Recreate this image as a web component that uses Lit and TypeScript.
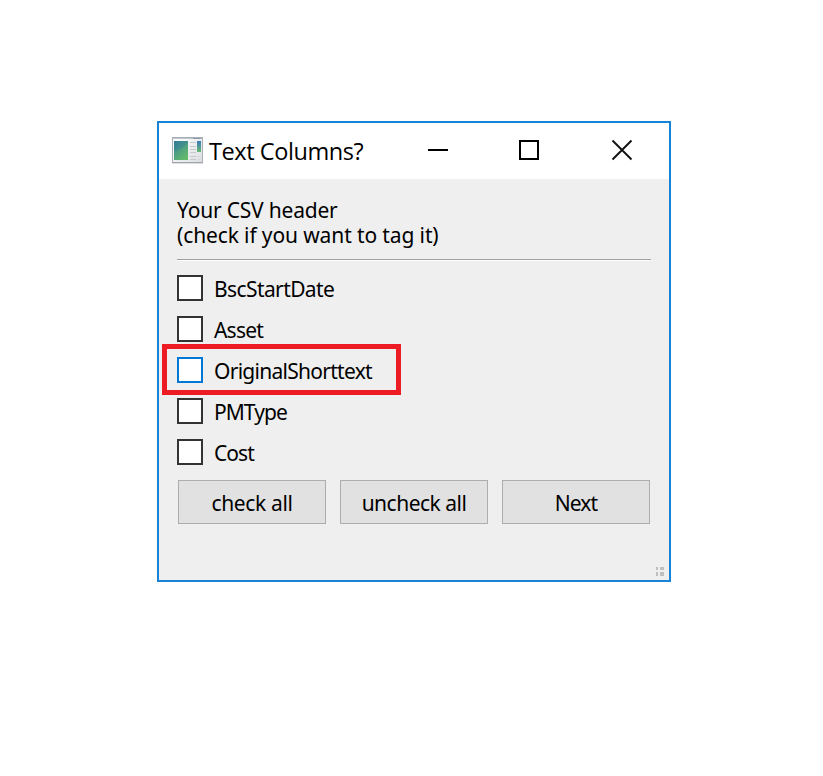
import { LitElement, html, css, svg } from "lit";
import { customElement, property } from "lit/decorators.js";
import { classMap } from "lit/directives/class-map.js";

interface Column {
  name: string;
  focused?: boolean;
  tracking: number;
}

const columns: Column[] = [
  { name: "BscStartDate", tracking: -0.6 },
  { name: "Asset", tracking: -0.8 },
  { name: "OriginalShorttext", focused: true, tracking: -0.72 },
  { name: "PMType", tracking: -0.95 },
  { name: "Cost", tracking: -0.95 },
];

const actions = [
  { label: "check all", tracking: -0.35 },
  { label: "uncheck all", tracking: -0.5 },
  { label: "Next", tracking: -0.9 },
];

@customElement("check-row")
class CheckRow extends LitElement {
  @property() label = "";
  @property({ type: Boolean }) focused = false;
  @property({ type: Number }) tracking = 0;

  static styles = css`
    :host { display: block; height: 41px; }
    .row { position: relative; display: flex; align-items: flex-start; height: 26px; gap: 11px; }
    .box { box-sizing: border-box; width: 26px; height: 26px; border: 2px solid #333; background: #fff; }
    .box.focused { border-color: #0078d7; }
    .label { line-height: 28px; white-space: nowrap; }
    .highlight {
      position: absolute; box-sizing: border-box;
      left: -15px; top: -13px; width: 239px; height: 51px;
      border: 5px solid #ed1c24;
    }
  `;

  render() {
    return html`<div class="row">
      <div class=${classMap({ box: true, focused: this.focused })}></div>
      <span class="label" style="letter-spacing:${this.tracking}px">${this.label}</span>
      ${this.focused ? html`<div class="highlight"></div>` : ""}
    </div>`;
  }
}

@customElement("app-root")
class AppRoot extends LitElement {
  static styles = css`
    :host {
      display: block; box-sizing: border-box; height: 776px;
      padding: 121px 152px 0 157px; background: #fff;
      font-family: "Noto Sans", sans-serif; font-size: 21px; color: #000;
    }
    .window {
      box-sizing: border-box; height: 461px; border: 2px solid #1883d7;
      background: #efefef; position: relative;
    }
    .titlebar { display: flex; height: 56px; background: #fff; }
    .appicon { width: 32px; height: 27px; margin: 14px 0 0 13px; }
    .title { width: 191px; margin-left: 5px; font: 23.5px/56px "Open Sans", sans-serif; letter-spacing: -0.42px; white-space: nowrap; }
    .controls { display: flex; padding: 16px 0 0 28px; gap: 71px; }
    .controls svg { width: 21px; height: 22px; overflow: visible; }
    .body { padding: 19px 18px 0; }
    .heading { height: 61px; line-height: 25px; white-space: nowrap; }
    .line1 { letter-spacing: -0.2px; }
    .line2 { letter-spacing: -0.12px; }
    .rule { height: 1px; background: #a0a0a0; border-bottom: 1px solid #fff; margin-bottom: 14px; }
    .actions { display: flex; gap: 14px; padding: 0 1px; }
    .btn {
      box-sizing: border-box; width: 148px; height: 44px; padding: 0; border: 1px solid #adadad;
      background: #e1e1e1; font: inherit; line-height: 44px; text-align: center; color: #000;
    }
    .grip { position: absolute; right: 5px; bottom: 4px; width: 8px; height: 9px; }
  `;

  appIcon() {
    return svg`<svg class="appicon" viewBox="0 0 32 27">
      <defs>
        <linearGradient id="pane" x1="0" y1="0" x2="0.7" y2="1">
          <stop offset="0" stop-color="#347d99"/><stop offset="0.45" stop-color="#4b9d84"/><stop offset="1" stop-color="#63b96a"/>
        </linearGradient>
        <linearGradient id="strip" x1="0" y1="0" x2="0" y2="1">
          <stop offset="0" stop-color="#3979b5"/><stop offset="1" stop-color="#67ba70"/>
        </linearGradient>
        <linearGradient id="frame" x1="0" y1="0" x2="1" y2="1">
          <stop offset="0" stop-color="#fff"/><stop offset="1" stop-color="#dcdee1"/>
        </linearGradient>
      </defs>
      <rect x="0.5" y="0.5" width="30" height="25" fill="url(#frame)" stroke="#a9adb4"/>
      <rect x="1" y="1" width="29" height="1" fill="#c0c6cf"/>
      <rect x="21" y="1" width="8" height="1" fill="#8f9bab"/>
      <rect x="2" y="4" width="14" height="19" fill="url(#pane)"/>
      <path d="M2 14Q8 14 16 6V4H2Z" fill="#2f739b" opacity=".3"/>
      <path d="M18 5.5H24M18 9.5H24M18 12.5H24M18 15.5H24M18 19.5H24M18 22.5H24" stroke="#c6c9cc"/>
      <rect x="25" y="4" width="4" height="11" fill="url(#strip)"/>
      <path d="M25 19.5H29M25 22.5H29" stroke="#d5d7da"/>
      <path d="M0 26H31" stroke="#8f9398" opacity=".6"/>
    </svg>`;
  }

  render() {
    return html`<div class="window">
      <div class="titlebar">
        ${this.appIcon()}
        <div class="title">Text Columns?</div>
        <div class="controls">
          <svg viewBox="0 0 21 22"><path d="M0 11H20" stroke="#000" stroke-width="2"/></svg>
          <svg viewBox="0 0 21 22"><rect x="0" y="2" width="18" height="18" fill="none" stroke="#000" stroke-width="2"/></svg>
          <svg viewBox="0 0 21 22"><path d="M0.5 1.5L19.5 20.5M19.5 1.5L0.5 20.5" stroke="#111" stroke-width="1.9"/></svg>
        </div>
      </div>
      <div class="body">
        <div class="heading"><div class="line1">Your CSV header</div><div class="line2">(check if you want to tag it)</div></div>
        <div class="rule"></div>
        ${columns.map((c) => html`<check-row .label=${c.name} .focused=${!!c.focused} .tracking=${c.tracking}></check-row>`)}
        <div class="actions">
          ${actions.map((a) => html`<button class="btn" style="letter-spacing:${a.tracking}px">${a.label}</button>`)}
        </div>
      </div>
      <svg class="grip" viewBox="0 0 8 9"><path d="M0 0H2V3H0ZM4 0H8V3H4ZM0 5H2V9H0ZM4 5H8V9H4Z" fill="#bfbfbf"/></svg>
    </div>`;
  }
}
